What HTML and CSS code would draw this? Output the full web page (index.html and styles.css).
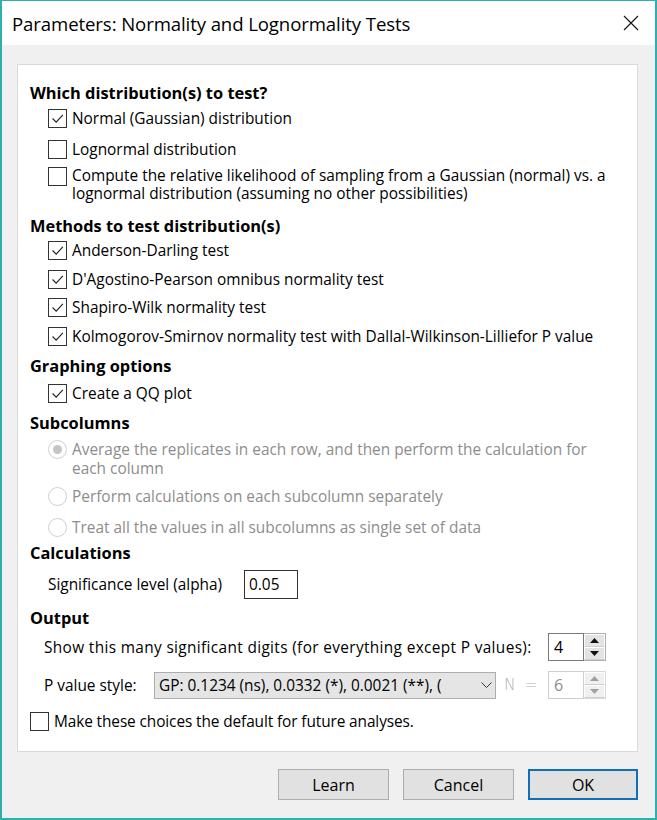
FILE: index.html
```html
<!DOCTYPE html>
<html>
<head>
<meta charset="utf-8">
<link rel="stylesheet" href="styles.css">
</head>
<body>
<div class="dialog">
  <div class="titlebar">
    <span class="title">Parameters: Normality and Lognormality Tests</span>
    <svg class="close" width="16" height="16" viewBox="0 0 16 16"><path d="M1 1 L15 15 M15 1 L1 15" stroke="#111" stroke-width="1.1" fill="none"/></svg>
  </div>
  <div class="body">
    <div class="panel">
      <div class="heading first">Which distribution(s) to test?</div>
      <div class="opt"><span class="cb checked"><svg viewBox="0 0 19 19"><path d="M4 9.5 L8 13.5 L15.5 5.5" stroke="#222" stroke-width="1.3" fill="none"/></svg></span><span class="lbl">Normal (Gaussian) distribution</span></div>
      <div class="opt mt5"><span class="cb"></span><span class="lbl">Lognormal distribution</span></div>
      <div class="opt mt5 multi compute"><span class="cb"></span><span class="lbl">Compute the relative likelihood of sampling from a Gaussian (normal) vs. a lognormal distribution (assuming no other possibilities)</span></div>

      <div class="heading mt10">Methods to test distribution(s)</div>
      <div class="opt"><span class="cb checked"><svg viewBox="0 0 19 19"><path d="M4 9.5 L8 13.5 L15.5 5.5" stroke="#222" stroke-width="1.3" fill="none"/></svg></span><span class="lbl">Anderson-Darling test</span></div>
      <div class="opt mt3"><span class="cb checked"><svg viewBox="0 0 19 19"><path d="M4 9.5 L8 13.5 L15.5 5.5" stroke="#222" stroke-width="1.3" fill="none"/></svg></span><span class="lbl">D'Agostino-Pearson omnibus normality test</span></div>
      <div class="opt mt2"><span class="cb checked"><svg viewBox="0 0 19 19"><path d="M4 9.5 L8 13.5 L15.5 5.5" stroke="#222" stroke-width="1.3" fill="none"/></svg></span><span class="lbl">Shapiro-Wilk normality test</span></div>
      <div class="opt mt3"><span class="cb checked"><svg viewBox="0 0 19 19"><path d="M4 9.5 L8 13.5 L15.5 5.5" stroke="#222" stroke-width="1.3" fill="none"/></svg></span><span class="lbl">Kolmogorov-Smirnov normality test with Dallal-Wilkinson-Lilliefor P value</span></div>

      <div class="heading mt4">Graphing options</div>
      <div class="opt mt3"><span class="cb checked"><svg viewBox="0 0 19 19"><path d="M4 9.5 L8 13.5 L15.5 5.5" stroke="#222" stroke-width="1.3" fill="none"/></svg></span><span class="lbl">Create a QQ plot</span></div>

      <div class="heading mt4">Subcolumns</div>
      <div class="opt mt6 multi disabled"><span class="rb on"></span><span class="lbl narrow">Average the replicates in each row, and then perform the calculation for each column</span></div>
      <div class="opt mt5 disabled"><span class="rb"></span><span class="lbl">Perform calculations on each subcolumn separately</span></div>
      <div class="opt mt5 disabled"><span class="rb"></span><span class="lbl">Treat all the values in all subcolumns as single set of data</span></div>

      <div class="heading">Calculations</div>
      <div class="field-row sig">
        <span class="field-lbl">Significance level (alpha)</span>
        <span class="textbox alpha">0.05</span>
      </div>

      <div class="heading mt6">Output</div>
      <div class="field-row digits">
        <span class="field-lbl">Show this many significant digits (for everything except P values):</span>
        <span class="spin">
          <span class="spin-input">4</span>
          <span class="spin-btns">
            <span class="spin-btn"><svg width="9" height="5" viewBox="0 0 9 5"><path d="M0 5 L4.5 0 L9 5 Z" fill="#111"/></svg></span>
            <span class="spin-btn"><svg width="9" height="5" viewBox="0 0 9 5"><path d="M0 0 L4.5 5 L9 0 Z" fill="#111"/></svg></span>
          </span>
        </span>
      </div>
      <div class="field-row pstyle">
        <span class="field-lbl">P value style:</span>
        <span class="select">
          <span class="select-text">GP: 0.1234 (ns), 0.0332 (*), 0.0021 (**), (</span>
          <svg class="chev" width="11" height="6" viewBox="0 0 11 6"><path d="M0.5 0.5 L5.5 5.5 L10.5 0.5" stroke="#333" stroke-width="1" fill="none"/></svg>
        </span>
        <span class="neq">N =</span>
        <span class="spin off">
          <span class="spin-input">6</span>
          <span class="spin-btns">
            <span class="spin-btn"><svg width="9" height="5" viewBox="0 0 9 5"><path d="M0 5 L4.5 0 L9 5 Z" fill="#a0a0a0"/></svg></span>
            <span class="spin-btn"><svg width="9" height="5" viewBox="0 0 9 5"><path d="M0 0 L4.5 5 L9 0 Z" fill="#a0a0a0"/></svg></span>
          </span>
        </span>
      </div>
      <div class="opt default-row"><span class="cb"></span><span class="lbl">Make these choices the default for future analyses.</span></div>
    </div>
    <div class="buttons">
      <button class="btn">Learn</button>
      <button class="btn">Cancel</button>
      <button class="btn primary">OK</button>
    </div>
  </div>
</div>
</body>
</html>
```
FILE: styles.css
```css
* { box-sizing: border-box; }
html, body { margin: 0; padding: 0; }
body {
  width: 657px;
  height: 820px;
  font-family: "Open Sans", "Noto Sans", sans-serif;
  color: #000;
  background: #f0f0f0;
}
.dialog {
  width: 657px;
  height: 820px;
  border: 2px solid #2fb0b0;
  border-top-width: 1px;
  background: #f0f0f0;
  display: flex;
  flex-direction: column;
}
.titlebar {
  height: 44px;
  background: #fff;
  display: flex;
  align-items: center;
  justify-content: space-between;
  padding: 0 16px 0 10px;
  flex: none;
}
.title {
  font-size: 18.6px;
  letter-spacing: -0.1px;
}
.close { width: 16px; height: 16px; }
.body {
  flex: 1;
  padding: 19px 17px 0 15px;
  display: flex;
  flex-direction: column;
}
.panel {
  height: 688px;
  background: #fff;
  border: 1px solid #dadada;
  padding: 16px 12px 0 12px;
  font-size: 15.4px;
}
.heading {
  height: 24px;
  line-height: 26px;
  font-weight: 700;
  font-size: 16.4px;
}
.heading.first { line-height: 24px; }
.mt2 { margin-top: 2px; }
.mt3 { margin-top: 3px; }
.mt4 { margin-top: 4px; }
.mt5 { margin-top: 5px; }
.mt6 { margin-top: 6px; }
.mt10 { margin-top: 10px; }
.opt {
  display: flex;
  align-items: center;
  height: 26px;
  padding-left: 18px;
  gap: 5px;
}
.opt.multi {
  height: 38px;
  align-items: flex-start;
}
.opt.multi .lbl { line-height: 19px; }
.lbl.narrow { max-width: 525px; }
.opt.compute { height: 36px; }
.opt.compute .lbl { line-height: 18px; }
.cb {
  width: 19px;
  height: 19px;
  flex: none;
  border: 1px solid #333;
  background: #fff;
  display: flex;
}
.cb svg { width: 17px; height: 17px; }
.rb {
  width: 19px;
  height: 19px;
  flex: none;
  border: 1px solid #cfcfcf;
  border-radius: 50%;
  background: #fff;
  display: flex;
  align-items: center;
  justify-content: center;
}
.rb.on::after {
  content: "";
  width: 9px;
  height: 9px;
  border-radius: 50%;
  background: #c4c4c4;
}
.disabled .lbl { color: #8d8d8d; }
.field-row {
  display: flex;
  align-items: center;
}
.sig {
  height: 30px;
  margin-top: 5px;
  padding-left: 18px;
}
.sig .field-lbl { width: 196px; }
.textbox {
  height: 29px;
  border: 1px solid #333;
  line-height: 27px;
  padding-left: 4px;
  background: #fff;
}
.alpha { width: 54px; }
.digits {
  height: 28px;
  margin-top: 4px;
  padding-left: 14px;
}
.digits .field-lbl { width: 504px; letter-spacing: 0.35px; white-space: nowrap; }
.spin {
  display: flex;
  height: 28px;
  width: 58px;
}
.spin-input {
  width: 36px;
  height: 28px;
  border: 1px solid #7a7a7a;
  line-height: 26px;
  padding-left: 5px;
  font-size: 16px;
}
.spin-btns {
  width: 22px;
  display: flex;
  flex-direction: column;
  border: 1px solid #adadad;
  border-left: none;
}
.spin-btn {
  flex: 1;
  background: #e3e3e3;
  border: 1px solid #fff;
  border-bottom-color: #cfcfcf;
  display: flex;
  align-items: center;
  justify-content: center;
}
.spin.off .spin-input { border-color: #cfcfcf; color: #8d8d8d; }
.spin.off .spin-btns { border-color: #d9d9d9; }
.spin.off .spin-btn { background: #f0f0f0; }
.pstyle {
  height: 28px;
  margin-top: 10px;
  padding-left: 14px;
}
.pstyle .field-lbl { width: 110px; }
.select {
  width: 342px;
  height: 27px;
  background: #e5e5e5;
  border: 1px solid #adadad;
  display: flex;
  align-items: center;
  padding-left: 4px;
}
.select-text {
  width: 314px;
  overflow: hidden;
  white-space: nowrap;
}
.chev { margin-left: 8px; }
.neq {
  width: 52px;
  padding-left: 8px;
  color: #b0b0b0;
  font-family: "DejaVu Sans", sans-serif;
  font-weight: 300;
  font-size: 15.5px;
  letter-spacing: 2px;
}
.default-row {
  margin-top: 9px;
  padding-left: 0;
}
.default-row .lbl { letter-spacing: -0.1px; }
.buttons {
  display: flex;
  justify-content: flex-end;
  gap: 14px;
  margin-top: 17px;
}
.btn {
  width: 111px;
  height: 31px;
  font-family: "Open Sans", "Noto Sans", sans-serif;
  font-size: 16px;
  background: #e1e1e1;
  border: 1px solid #adadad;
  color: #000;
  padding: 0;
}
.btn.primary {
  width: 110px;
  border: 2px solid #0f6fb8;
}
```
